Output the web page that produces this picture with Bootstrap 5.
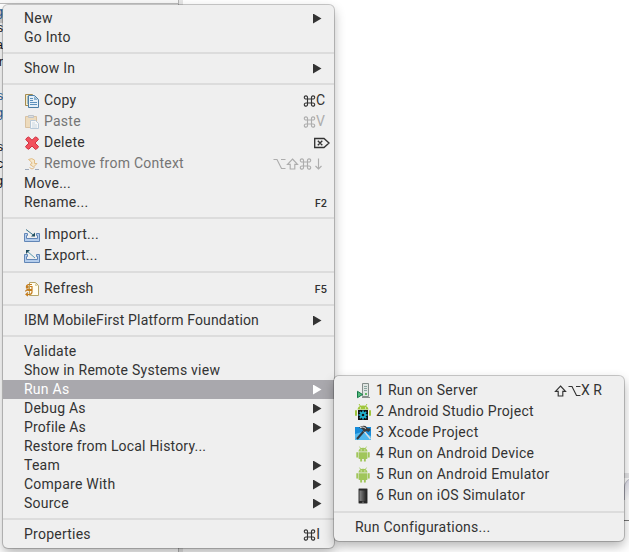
<!DOCTYPE html>
<html lang="en"><head><meta charset="utf-8"><title>Context menu</title>
<link href="https://cdn.jsdelivr.net/npm/bootstrap@5.3.0/dist/css/bootstrap.min.css" rel="stylesheet">
<style>
html,body{width:629px;height:552px;overflow:hidden}
body{background:#fff;font:14px/19px Roboto,"Noto Sans",sans-serif;color:#333}
.desk{width:629px;height:552px}
.pane{width:179px;height:552px;border-right:1px solid #b4b4b4}
.pane .strip{height:4px;background:#f8f8f8;border-bottom:1px solid #bbb}
.gutter{width:4px;background:#e6e6e6}
.rowsel{height:14px;margin-top:5px;background:#d4d4d4}
.frag{right:626px;font:12px/14px "Liberation Sans",Arial,sans-serif;color:#111}
.edge{left:620px;top:473px;width:9px;height:48px;border-bottom:1px solid #777;border-top:5px solid #e4e4e6}
.edge div{margin-left:4px;width:20px;height:22px;border:1px solid #bcbcc8;border-bottom:0;border-radius:9px 0 0 0;background:linear-gradient(#dcdce8,#fff)}
.ctx{background:#efefef;border-radius:5px;padding:4px 0;box-shadow:0 0 0 1px rgba(0,0,0,.2),0 5px 12px rgba(0,0,0,.3)}
.main{left:3px;top:5px;width:331px;height:543px}
.sub{left:334px;top:376px;width:290px;height:165px}
.it{height:19px;padding-left:21px;white-space:nowrap;letter-spacing:.24px}
.ic{height:21px}
.ic svg{width:16px;height:16px;margin-right:4px;flex:none}
.sub .ic{letter-spacing:.29px}
.sub .ic>svg{margin-right:5px}
.tight{letter-spacing:.15px}
.sep{height:12px;padding:5px 0}
.sep div{height:2px;background:#dcdcdc}
.on{background:#a9a8ad;color:#fff}
.off{color:#757575}
.tri{margin-left:auto;margin-right:12.500px;width:8.500px;height:10px;background:currentColor;clip-path:polygon(0 0,100% 50%,0 100%)}
.key{margin-left:auto;margin-right:9px;display:flex;align-items:center;letter-spacing:0}
.it .key svg{width:13px;height:12px;margin:0;fill:none;stroke:currentColor;stroke-width:1.150}
.it .key svg.del{width:16px}
.off .key{color:#adadad}
.f{font:600 10px/19px Inter,sans-serif;margin-right:7px;padding-top:1px}
.sub .key{margin-right:22px}
</style>
<script src="https://cdn.jsdelivr.net/npm/bootstrap@5.3.0/dist/js/bootstrap.bundle.min.js"></script></head>
<body>
<svg class="d-none"><defs>
<symbol id="cmd" viewBox="0 0 12 12"><path d="M4 4h4v4H4zM4 4H2.600A1.600 1.600 0 1 1 4 2.600zM8 4V2.600A1.600 1.600 0 1 1 9.400 4zM8 8h1.400A1.600 1.600 0 1 1 8 9.400zM4 8v1.400A1.600 1.600 0 1 1 2.600 8z"/></symbol>
<symbol id="opt" viewBox="0 0 12 12"><path d="M0 1.500h3.500l4.500 9h4M7.500 1.500H12"/></symbol>
<symbol id="shift" viewBox="0 0 12 12"><path d="M6 1l5 5.300H8.300V11H3.700V6.300H1z"/></symbol>
<symbol id="droid" viewBox="0 0 16 16"><path fill="#a0c65a" d="M3.500 5.500C3.500 3.200 5.500 1.700 8 1.700s4.500 1.500 4.500 3.800zM3.500 6.200h9V12q0 1-1 1h-.7v2.500H8.900V13H7.100v2.500H5.200V13h-.7q-1 0-1-1zM1.300 7q0-1 .8-1t.9 1v4q0 .8-.9.8t-.8-.8zM13 7q0-1 .9-1t.8 1v4q0 .8-.8.8t-.9-.8z"/><path stroke="#a0c65a" stroke-width=".8" d="M4.500.6L6 3M11.500.6L10 3"/><path fill="#fff" d="M5.700 3.600h.9v.9h-.9zM9.400 3.600h.9v.9h-.9z"/></symbol>
<symbol id="tray" viewBox="0 0 16 16"><path fill="#b4cdec" stroke="#6286b6" d="M.5 6.500h3v2h-1v3h11v-3h-1v-2h3v8H.5z"/></symbol>
</defs></svg>
<main class="desk d-flex position-relative overflow-hidden">
<div class="pane"><div class="strip"></div><div class="rowsel"></div></div><div class="gutter"></div>
<div class="edge position-absolute overflow-hidden"><div></div></div>
<span class="frag position-absolute" style="top:5px;color:#1d5c96">g</span>
<span class="frag position-absolute" style="top:21px">s</span>
<span class="frag position-absolute" style="top:38px">a</span>
<span class="frag position-absolute" style="top:55px">r</span>
<span class="frag position-absolute" style="top:89px;color:#1d5c96">s</span>
<span class="frag position-absolute" style="top:106px;color:#1d5c96">g</span>
<span class="frag position-absolute" style="top:140px">s</span>
<span class="frag position-absolute" style="top:157px">c</span>
<span class="frag position-absolute" style="top:174px">g</span>
<div class="ctx main position-absolute">
<div class="it d-flex align-items-center">New<i class="tri"></i></div>
<div class="it">Go Into</div>
<div class="sep"><div></div></div>
<div class="it d-flex align-items-center">Show In<i class="tri"></i></div>
<div class="sep"><div></div></div>
<div class="it ic d-flex align-items-center"><svg viewBox="0 0 16 16"><path fill="#f4eccb" stroke="#a58b50" d="M1.500 1.500h7v11h-7z"/><path stroke="#5d89b0" d="M3 4h3M3 6h3M3 8h3M3 10h3"/><path fill="#e5f0f8" stroke="#4c7ea6" d="M4.500 2.500h6l4 4v8h-10z"/><path fill="#8db3d0" d="M10 3v4h4z"/><path stroke="#5d91bd" d="M6 5.500h3M6 7.500h3M6 9.500h7M6 11.500h7"/></svg>Copy<span class="key"><svg><use href="#cmd"/></svg>C</span></div>
<div class="it ic off d-flex align-items-center"><svg viewBox="0 0 16 16" opacity=".5"><path fill="#ecc98c" stroke="#c59658" d="M1.500 2.500h11v11h-11z"/><path fill="#ccd0d5" stroke="#909aa6" d="M4.500 1.500h5v2h-5z"/><path fill="#fff" stroke="#83a5c4" d="M6.500 6.500h5l3 3v5h-8z"/><path stroke="#a6c1d8" d="M8 9h3M8 11h5M8 13h5"/></svg>Paste<span class="key"><svg><use href="#cmd"/></svg>V</span></div>
<div class="it ic d-flex align-items-center"><svg viewBox="0 0 16 16"><path fill="#f2505d" stroke="#cf3341" stroke-linejoin="round" d="M1.700 4.500Q3 2 4.700 2L8 5.200 11.300 2Q13.500 2 14.500 4.500L11 8l3.500 3.500q-.5 2-3 3L8 11l-3.300 3.300Q2.300 13.500 1.500 11.500L5 8z"/></svg>Delete<span class="key me-1"><svg class="del" viewBox="0 0 16 12"><path d="M.7 1.500h9.300L15 6l-5 4.500H.7zM3.800 3.800L8.300 8.300M8.300 3.800L3.800 8.300" stroke-width="1.350"/></svg></span></div>
<div class="it ic off d-flex align-items-center"><svg viewBox="0 0 16 16" opacity=".7" fill="none"><path fill="#f9e6bd" stroke="#dca85c" d="M4.500 3.500Q8 1.500 10.500 4v3.500H13L9.500 11 6 8.500l2-1L7.500 6z"/><path stroke="#7c8ca3" d="M1 13.500h4M11 13.500h4"/><path stroke="#dca85c" d="M5.500 11.500L8 13l2.500-1.500"/></svg>Remove from Context<span class="key"><svg><use href="#opt"/></svg><svg><use href="#shift"/></svg><svg><use href="#cmd"/></svg><svg viewBox="0 0 12 12"><path d="M6 .5v10.500M3 8L6 11l3-3"/></svg></span></div>
<div class="it">Move...</div>
<div class="it d-flex">Rename...<span class="key f">F2</span></div>
<div class="sep"><div></div></div>
<div class="it ic d-flex align-items-center"><svg viewBox="0 0 16 16"><use href="#tray"/><path stroke="#39758c" d="M2 2.500l8 6"/><path fill="#214e5e" d="M11 5.500v4H7z"/></svg>Import...</div>
<div class="it ic d-flex align-items-center"><svg viewBox="0 0 16 16"><use href="#tray"/><path stroke="#5799ae" d="M3 3l8 7"/><path fill="#214e5e" d="M2 6V2h4z"/></svg>Export...</div>
<div class="sep"><div></div></div>
<div class="it ic d-flex align-items-center"><svg viewBox="0 0 16 16" fill="none"><path fill="#fffdf0" stroke="#b7a466" d="M5.500 1.500h6l3 3v10h-9z"/><path fill="#ddd0a0" d="M11 2v3h3z"/><path stroke="#c47c1d" stroke-width="1.200" d="M8 3.500H4.500Q2 4 2.500 7H5M4.500 5l-2 2.300M6 5.500h2v3H2.500M1.500 10.500Q2 8.500 5 9.500h3q.5 3.500-2.500 4H2M4 11.500l-2 2 2 1.500"/></svg>Refresh<span class="key f">F5</span></div>
<div class="sep"><div></div></div>
<div class="it tight d-flex align-items-center">IBM MobileFirst Platform Foundation<i class="tri"></i></div>
<div class="sep"><div></div></div>
<div class="it">Validate</div>
<div class="it">Show in Remote Systems view</div>
<div class="it on d-flex align-items-center">Run As<i class="tri"></i></div>
<div class="it d-flex align-items-center">Debug As<i class="tri"></i></div>
<div class="it tight d-flex align-items-center">Profile As<i class="tri"></i></div>
<div class="it" style="letter-spacing:.19px">Restore from Local History...</div>
<div class="it d-flex align-items-center">Team<i class="tri"></i></div>
<div class="it d-flex align-items-center">Compare With<i class="tri"></i></div>
<div class="it d-flex align-items-center">Source<i class="tri"></i></div>
<div class="sep"><div></div></div>
<div class="it d-flex align-items-center">Properties<span class="key" style="margin-right:14px"><svg><use href="#cmd"/></svg>I</span></div>
</div>
<div class="ctx sub position-absolute">
<div class="it ic d-flex align-items-center"><svg viewBox="0 0 16 16"><path fill="#dfe5e2" stroke="#848e8b" d="M7.500.5h6v13h-6z"/><path stroke="#8aa5a0" d="M9 3.500h3M9 5.500h3M9 7.500h3"/><path fill="#62b867" d="M10 10h2v2h-2z"/><path stroke="#8a8f8d" d="M7 14.500h8"/><path fill="#56b97c" stroke="#147a48" d="M2.500 8.300l5 3.200-5 3.200z"/></svg>1 Run on Server<span class="key"><svg><use href="#shift"/></svg><svg style="margin-left:1px"><use href="#opt"/></svg>X R</span></div>
<div class="it ic d-flex align-items-center"><svg viewBox="0 0 16 16"><path fill="#a0c63c" d="M2.500 5.500Q3 1.500 8 1.500t5.500 4zM0 7q0-1 1-1t1 1v4q0 1-1 1t-1-1zM14 7q0-1 1-1t1 1v4q0 1-1 1t-1-1z"/><path stroke="#a0c63c" d="M4 0l2 3M12 0l-2 3"/><path fill="#fff" d="M5 3.500h1v1H5zM10 3.500h1v1h-1z"/><path fill="#111" d="M3 6h10v10H3z"/><path stroke="#23b5d3" stroke-width="1.500" d="M8 6.500v9M3.500 11h9M4.800 7.800l6.400 6.400M11.200 7.800l-6.400 6.400"/><circle cx="8" cy="11" r="3" fill="#23b5d3"/><circle cx="8" cy="11" r="1.300" fill="#111"/></svg>2 Android Studio Project</div>
<div class="it ic d-flex align-items-center"><svg viewBox="0 0 16 16"><path fill="#168bd9" d="M0 2h16v13H0z"/><path fill="#52b8ee" d="M0 9l7-2 9 4v4H0z"/><path stroke="#343a40" stroke-width="2" d="M2 14L9 6"/><path stroke="#d9dde0" stroke-width="1.500" d="M9 6l6.500 8"/><path fill="#3c3c3c" d="M4 2.500Q7 0 10.500 1l2.500 2.500 1.500-.5 1 2-2 2-2-1-2 1-2.500-3z"/><path stroke="#e2e2e2" d="M5 2.500q3-1.500 6 1"/></svg>3 Xcode Project</div>
<div class="it ic d-flex align-items-center"><svg><use href="#droid"/></svg>4 Run on Android Device</div>
<div class="it ic d-flex align-items-center"><svg><use href="#droid"/></svg>5 Run on Android Emulator</div>
<div class="it ic d-flex align-items-center"><svg viewBox="0 0 16 16"><defs><linearGradient id="ph"><stop stop-color="#888"/><stop offset="1" stop-color="#222"/></linearGradient></defs><rect x="3.500" y=".5" width="9" height="15" rx="1" fill="#292929" stroke="#999" stroke-width=".6"/><path fill="url(#ph)" d="M4.500 2.500h7v10.500h-7z"/><circle cx="8" cy="14.200" r=".6" fill="#aaa"/></svg>6 Run on iOS Simulator</div>
<div class="sep"><div></div></div>
<div class="it">Run Configurations...</div>
</div>
</main></body></html>
